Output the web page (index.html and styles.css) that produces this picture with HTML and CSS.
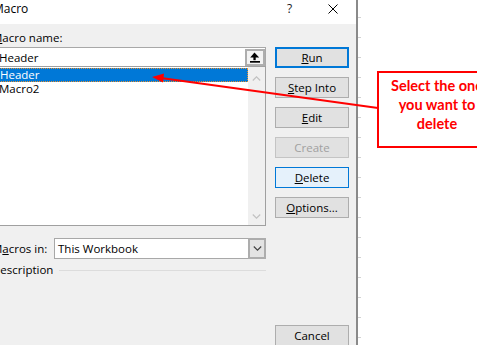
FILE: index.html
```html
<!DOCTYPE html>
<html>
<head>
<meta charset="utf-8">
<link rel="stylesheet" href="styles.css">
</head>
<body>
<div class="page">
  <div class="dialog">
    <div class="titlebar">
      <span class="title">Macro</span>
      <span class="cap help">?</span>
      <span class="cap close"><svg width="10" height="10" viewBox="0 0 10 10"><path d="M0.5 0.5L9.5 9.5M9.5 0.5L0.5 9.5" stroke="#000" stroke-width="1" fill="none"/></svg></span>
    </div>
    <div class="main">
      <div class="left">
        <div class="label"><u>M</u>acro name:</div>
        <div class="input">
          <span class="input-text">Header</span>
          <span class="upbtn"><svg width="16" height="13" viewBox="0 0 16 13"><path d="M7.5 1.5L12.2 6.5H3.2Z" fill="#000"/><rect x="6.4" y="6" width="2.3" height="3.2" fill="#000"/><rect x="3" y="10" width="10" height="1.7" fill="#000"/></svg></span>
        </div>
        <div class="list">
          <div class="items">
            <div class="item selected">Header</div>
            <div class="item">Macro2</div>
          </div>
          <div class="scrollbar">
            <svg width="9" height="5" viewBox="0 0 9 5"><path d="M0.8 4.5L4.5 0.8L8.2 4.5" stroke="#c2c2c2" stroke-width="1.2" fill="none"/></svg>
            <svg width="9" height="5" viewBox="0 0 9 5"><path d="M0.8 0.5L4.5 4.2L8.2 0.5" stroke="#c2c2c2" stroke-width="1.2" fill="none"/></svg>
          </div>
        </div>
        <div class="macros-row">
          <span class="row-label">M<u>a</u>cros in:</span>
          <div class="select">
            <span class="select-text">This Workbook</span>
            <span class="dd"><svg width="9" height="5" viewBox="0 0 9 5"><path d="M0.8 0.5L4.5 4.2L8.2 0.5" stroke="#404040" stroke-width="1.1" fill="none"/></svg></span>
          </div>
        </div>
        <div class="desc"><span>Description</span><span class="rule"></span></div>
      </div>
      <div class="buttons">
        <div class="btn default"><u>R</u>un</div>
        <div class="btn"><u>S</u>tep Into</div>
        <div class="btn"><u>E</u>dit</div>
        <div class="btn disabled">Create</div>
        <div class="btn hot"><u>D</u>elete</div>
        <div class="btn"><u>O</u>ptions...</div>
        <div class="btn cancel">Cancel</div>
      </div>
    </div>
  </div>
  <div class="sheet"></div>
  <svg class="arrow" width="477" height="345" viewBox="0 0 477 345">
    <line x1="378" y1="108" x2="161" y2="78" stroke="#ff0000" stroke-width="2"/>
    <polygon points="152,77 164,73.4 163,82.4" fill="#ff0000"/>
  </svg>
  <div class="callout">
    <div>Select the one</div>
    <div>you want to</div>
    <div>delete</div>
  </div>
</div>
</body>
</html>
```

FILE: styles.css
```css
html, body {
  margin: 0;
  padding: 0;
  background: #ffffff;
  overflow: hidden;
}

.page {
  position: relative;
  display: flex;
  width: 477px;
  height: 345px;
  overflow: hidden;
  font-family: "Open Sans", "Noto Sans", sans-serif;
  font-size: 11.5px;
  color: #000;
}

.dialog {
  flex-shrink: 0;
  margin-left: -20px;
  width: 376px;
  height: 345px;
  border-right: 2px solid #8a8a8a;
  background: #f0f0f0;
}

.titlebar {
  display: flex;
  align-items: flex-start;
  height: 24px;
  background: #ffffff;
  font-size: 12px;
  line-height: 17px;
}

.title {
  flex: 1;
  padding-left: 13px;
}

.cap {
  width: 46px;
  text-align: center;
}

.help {
  box-sizing: border-box;
  padding-left: 5px;
  color: #1a1a1a;
}

.close svg {
  display: block;
  margin: 4px auto 0;
}

.main {
  display: flex;
  gap: 9px;
  padding: 4px 7px 0 12px;
}

.left {
  width: 274px;
}

.label {
  height: 19px;
  line-height: 19px;
}

.input {
  box-sizing: border-box;
  display: flex;
  align-items: center;
  height: 19px;
  border: 1px solid #a8a8a8;
  border-bottom: none;
  background: #fff;
}

.input-text {
  flex: 1;
  padding-left: 6px;
  line-height: 17px;
}

.upbtn {
  box-sizing: border-box;
  width: 20px;
  height: 17px;
  border: 2px solid #adadad;
  background: #f3f3f3;
  margin-top: 1px;
}

.upbtn svg {
  display: block;
}

.list {
  box-sizing: border-box;
  display: flex;
  height: 160px;
  border: 1px solid #a0a0a0;
  background: #fff;
}

.items {
  flex: 1;
  padding-top: 1px;
}

.item {
  box-sizing: border-box;
  height: 14px;
  line-height: 13px;
  padding-left: 6px;
}

.selected {
  background: #0078d7;
  color: #fff;
  border: 1px dotted #e8912f;
  line-height: 12px;
}

.scrollbar {
  width: 17px;
  background: #f0f0f0;
  display: flex;
  flex-direction: column;
  justify-content: space-between;
  align-items: center;
  padding: 9px 0 6px;
}

.scrollbar svg {
  display: block;
}

.macros-row {
  display: flex;
  align-items: center;
  margin-top: 12px;
  height: 21px;
}

.row-label {
  width: 62px;
}

.select {
  box-sizing: border-box;
  flex: 1;
  display: flex;
  align-items: center;
  height: 21px;
  border: 1px solid #a8a8a8;
  background: #fff;
}

.select-text {
  flex: 1;
  padding-left: 3px;
}

.dd {
  box-sizing: border-box;
  align-self: stretch;
  width: 18px;
  margin: -1px -1px -1px 0;
  border: 2px solid #adadad;
  background: #e3e3e3;
  display: flex;
  align-items: center;
  justify-content: center;
}

.dd svg {
  display: block;
}

.desc {
  display: flex;
  align-items: center;
  gap: 6px;
  margin-top: 4px;
  line-height: 14px;
}

.rule {
  flex: 1;
  height: 1px;
  background: #dcdcdc;
}

.buttons {
  width: 74px;
  display: flex;
  flex-direction: column;
  gap: 9px;
  padding-top: 19px;
}

.btn {
  box-sizing: border-box;
  height: 21px;
  line-height: 19px;
  text-align: center;
  border: 1px solid #adadad;
  background: #e1e1e1;
}

.btn.default {
  border: 2px solid #0078d7;
  line-height: 17px;
}

.btn.disabled {
  color: #a0a0a0;
  border-color: #c4c4c4;
}

.btn.hot {
  background: #e5f1fb;
  border-color: #0078d7;
}

.btn.cancel {
  margin-top: 98px;
}

.sheet {
  flex: 1;
  background: linear-gradient(to bottom, transparent 19px, #d2d2d2 19px) 0 18px / 3px 20px repeat-y;
}

.arrow {
  position: absolute;
  left: 0;
  top: 0;
  pointer-events: none;
}

.callout {
  position: absolute;
  left: 377px;
  top: 71px;
  box-sizing: border-box;
  width: 120px;
  height: 77px;
  border: 2px solid #ff0000;
  background: #fff;
  padding-top: 3px;
  text-align: center;
  font-family: "Lato", "Open Sans", sans-serif;
  font-weight: bold;
  font-size: 14.5px;
  line-height: 19px;
  color: #ff0000;
}
```
